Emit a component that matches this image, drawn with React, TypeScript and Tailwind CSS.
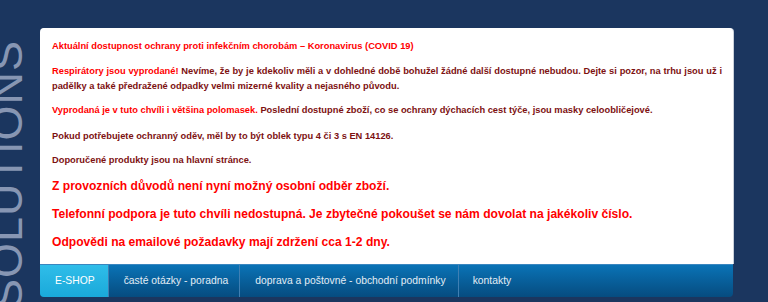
import React from "react";

export default function App() {
  const small = "text-[9.3px] leading-[15px] font-bold text-justify";
  const big = "text-[12.1px] leading-[19px] font-bold text-[#ff0000]";
  return (
    <div className="relative w-[768px] h-[302px] overflow-hidden bg-[#1b365f] font-['Liberation_Sans',Arial,sans-serif]">
      <div className="absolute left-[-16px] top-[309px] origin-top-left -rotate-90 whitespace-nowrap text-[45px] leading-none tracking-[1px] text-[#8796b3]">
        SOLUTIONS
      </div>
      <div className="relative pl-10 pt-7 w-[733px]">
        <div className="h-[236px] rounded-t-[4px] bg-white pl-3 pr-[11px] pt-[11px] shadow-[1px_0_0_#c9d0da]">
          <p className={`${small} text-[#ff0000]`}>
            Aktuální dostupnost ochrany proti infekčním chorobám – Koronavirus (COVID 19)
          </p>
          <p className={`${small} mt-[10px] text-[#7d1111]`}>
            <span className="text-[#ff0000]">Respirátory jsou vyprodané!</span> Nevíme, že by je kdekoliv měli a v dohledné době bohužel žádné další dostupné nebudou. Dejte si pozor, na trhu jsou už i padělky a také předražené odpadky velmi mizerné kvality a nejasného původu.
          </p>
          <p className={`${small} mt-[9px] text-[#7d1111]`}>
            <span className="text-[#ff0000]">Vyprodaná je v tuto chvíli i většina polomasek.</span> Poslední dostupné zboží, co se ochrany dýchacích cest týče, jsou masky celoobličejové.
          </p>
          <p className={`${small} mt-[11px] text-[#7d1111]`}>
            Pokud potřebujete ochranný oděv, měl by to být oblek typu 4 či 3 s EN 14126.
          </p>
          <p className={`${small} mt-[9px] text-[#7d1111]`}>
            Doporučené produkty jsou na hlavní stránce.
          </p>
          <p className={`${big} mt-[9px]`}>
            Z provozních důvodů není nyní možný osobní odběr zboží.
          </p>
          <p className={`${big} mt-[9px]`}>
            Telefonní podpora je tuto chvíli nedostupná. Je zbytečné pokoušet se nám dovolat na jakékoliv číslo.
          </p>
          <p className={`${big} mt-[9px]`}>
            Odpovědi na emailové požadavky mají zdržení cca 1-2 dny.
          </p>
        </div>
        <nav className="flex h-[33px] rounded-b-[4px] bg-gradient-to-b from-[#0a73b6] to-[#064c80] border-t border-[#3a86bf] text-[10.35px] text-[#e3edf5]">
          <a className="flex items-center pl-[15px] pr-[13px] rounded-bl-[4px] bg-gradient-to-b from-[#2fbde9] to-[#19a9da] text-white border-r border-[#3f7fb3]">
            E-SHOP
          </a>
          <a className="flex items-center pl-[15px] pr-[11px] border-r border-[#3f7fb3]">
            časté otázky - poradna
          </a>
          <a className="flex items-center pl-[15px] pr-[12px] border-r border-[#3f7fb3]">
            doprava a poštovné - obchodní podmínky
          </a>
          <a className="flex items-center pl-[14px] pr-[13px]">
            kontakty
          </a>
        </nav>
      </div>
    </div>
  );
}
